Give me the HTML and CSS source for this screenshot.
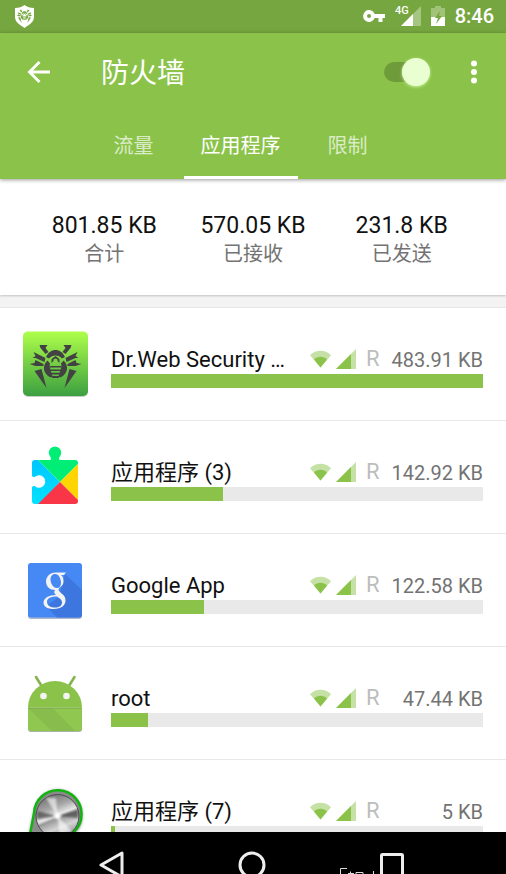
FILE: index.html
```html
<!DOCTYPE html>
<html lang="zh-CN">
<head>
<meta charset="utf-8">
<meta name="viewport" content="width=device-width, initial-scale=1">
<title>防火墙</title>
<link rel="stylesheet" href="styles.css">
</head>
<body>
<svg class="defs" aria-hidden="true">
  <symbol id="wifi" viewBox="0 0 21 18">
    <path d="M0 5.200C6-.7 15-.7 21 5.200L10.500 17.500z" fill="#c5e1a5"/>
    <path d="M4 9.400C7 6 14 6 17 9.400L10.500 17.500z" fill="#8bc34a"/>
  </symbol>
  <symbol id="cell" viewBox="0 0 20 20">
    <path d="M0 20L20 0v20z" fill="#c5e1a5"/>
    <path d="M0 20L15 5v15z" fill="#8bc34a"/>
  </symbol>
  <symbol id="spider" viewBox="0 0 52 44">
    <path d="M10 0h8l-2 3 3 4-3 2-5-6zM42 0h-8l2 3-3 4 3 2 5-6zM4 7l12 6-1 4-9-4-3 0 3-2zM48 7l-12 6 1 4 9-4 3 0-3-2zM6 15l8 4v2l-8 0-6-2 5-1zM46 15l-8 4v2l8 0 6-2-5-1zM5 26l7-2 5 19zM47 26l-7-2-5 19z"/>
    <path d="M16.500 12C19 7 22 5 26 5s7 2 9.500 7l-3 1.500C29 9.500 23 9.500 19.500 13.500z"/>
    <path d="M18 15.500C13 20 12.500 28 21 32.500l2-1-3-10 .5-3zM34 15.500c5 4.500 5.500 12.500-3 17l-2-1 3-10-.5-3z"/>
    <path d="M20 21h12v1.600H20zM20.500 24.400h11V26h-11zM21.500 27.800h9v1.600h-9zM21.500 31h9L29 33h-6z"/>
    <path d="M22 18v-4l4-3 4 3v4l-2-2v-1.500l-2-1-2 1V16z"/>
  </symbol>
</svg>

<div class="status">
  <svg class="shield" viewBox="0 0 21 23">
    <path d="M1 3C5 3 8 2 10.500 0 13 2 16 3 20 3v9c0 5-5 8-9.500 11C6 20 1 17 1 12z" fill="#fff"/>
    <use href="#spider" x="2.500" y="4.500" width="16" height="14" fill="#76a63f"/>
  </svg>
  <div class="status-right">
    <svg class="key" viewBox="0 0 22 12"><path fill="#fff" fill-rule="evenodd" d="M11.700 4A6 6 0 1 0 11.700 8H15.500v4h4V8H22V4zM6 4a2 2 0 1 1 0 4 2 2 0 0 1 0-4z"/></svg>
    <span class="mobile">
      <span class="net">4G</span>
      <svg class="signal" viewBox="0 0 20 20"><path d="M0 20L20 0v20z" fill="#a5c580"/><path d="M0 20L12 8v12z" fill="#fff"/></svg>
    </span>
    <svg class="battery" viewBox="0 0 14 20"><path d="M0 2h4V0h6v2h4v10H0z" fill="#a0c377"/><path d="M0 11h14v9H0z" fill="#fff"/><path d="M9 5L4 12h3l-2 6 6-8H8z" fill="#76a63f"/></svg>
    <time>8:46</time>
  </div>
</div>

<header class="header">
  <div class="bar">
    <button class="icon-button" type="button" aria-label="返回"><svg class="back" viewBox="0 0 24 22"><path d="M12.500 1L2.500 11l10 10M2.500 11H23" fill="none" stroke="#fff" stroke-width="2.800"/></svg></button>
    <h1>防火墙</h1>
    <input class="switch" type="checkbox" checked aria-label="防火墙">
    <button class="icon-button" type="button" aria-label="更多"><svg class="more" viewBox="0 0 6 24"><g fill="#fff"><circle cx="3" cy="3.500" r="3"/><circle cx="3" cy="12" r="3"/><circle cx="3" cy="20.500" r="3"/></g></svg></button>
  </div>
  <nav class="tabs">
    <a href="#traffic">流量</a>
    <a href="#apps" class="active" aria-current="page">应用程序</a>
    <a href="#limits">限制</a>
  </nav>
</header>

<main class="content">
  <dl class="summary">
    <div><dd>801.85 KB</dd><dt>合计</dt></div>
    <div><dd>570.05 KB</dd><dt>已接收</dt></div>
    <div><dd>231.8 KB</dd><dt>已发送</dt></div>
  </dl>

  <ul class="apps">
    <li class="app">
      <svg class="app-icon" viewBox="0 0 66 66">
        <defs><linearGradient id="lime" x2="0" y2="1"><stop stop-color="#aeff4a"/><stop offset="1" stop-color="#3c9f40"/></linearGradient></defs>
        <rect x="1" y="1" width="65" height="65" rx="5" fill="#c9cfc5"/>
        <rect x="1" y=".5" width="65" height="64.500" rx="5" fill="url(#lime)"/>
        <use href="#spider" x="7.500" y="14" width="52" height="44" fill="#424242"/>
      </svg>
      <div class="info">
        <div class="line"><span class="name">Dr.Web Security …</span><span class="access"><svg class="wifi"><use href="#wifi"/></svg><svg class="cell"><use href="#cell"/></svg><span class="roaming">R</span></span><span class="amount">483.91 KB</span></div>
        <div class="meter"><div class="fill" style="width:100%"></div></div>
      </div>
    </li>
    <li class="app">
      <svg class="app-icon" viewBox="0 0 66 66">
        <defs>
          <linearGradient id="sky" x2="0" y2="1"><stop stop-color="#00c0ff"/><stop offset="1" stop-color="#00e4ff"/></linearGradient>
          <clipPath id="piece"><path d="M13 16h14c2 0 2.500-1 1.500-3a6.200 6.200 0 1 1 9 0c-1 2-.5 3 1.500 3h14a3 3 0 0 1 3 3v38a3 3 0 0 1-3 3H13a3 3 0 0 1-3-3V44c0-2 1-2.500 3-1.800a6.200 6.200 0 1 0 0-9.400c-2 .7-3 0-3-1.800V19a3 3 0 0 1 3-3z"/></clipPath>
        </defs>
        <g clip-path="url(#piece)">
          <path d="M8 8l30 30-22 24H8z" fill="url(#sky)"/>
          <path d="M16 16V0h42v18L38 38z" fill="#00ee76"/>
          <path d="M58 18v40L38 38z" fill="#ffd500"/>
          <path d="M38 38l20 20v4H14z" fill="#f93647"/>
        </g>
      </svg>
      <div class="info">
        <div class="line"><span class="name">应用程序 (3)</span><span class="access"><svg class="wifi"><use href="#wifi"/></svg><svg class="cell"><use href="#cell"/></svg><span class="roaming">R</span></span><span class="amount">142.92 KB</span></div>
        <div class="meter"><div class="fill" style="width:30%"></div></div>
      </div>
    </li>
    <li class="app">
      <svg class="app-icon" viewBox="0 0 66 66">
        <rect x="6" y="7" width="54" height="55" rx="3" fill="#aeb9cb"/>
        <rect x="6" y="6" width="54" height="54.500" rx="3" fill="#4688f4"/>
        <path d="M43 17l17 16v24.500a3 3 0 0 1-3 3H35L24 49l13-9z" fill="#3d76df"/>
        <path fill="#f3f3f3" fill-rule="evenodd" d="M44 15.500H34c-7 0-10 5-10 9 0 5 4 8.500 9 8.500-1.500 2-.5 4 1 5-7 0-12.500 3-12.500 7.500 0 4.500 4.500 6.500 10 6.500 8 0 12-4 12-8.500 0-4-2-5.500-5-8-3-2.500-2-4 0-5.500 2-1.500 3-3 3-6 0-3-1-5-2.500-6H42zM33 17c4 0 6 5 6 9 0 3-1.500 5-4 5-4 0-6.500-5-6.500-8.500 0-3 1.500-5.500 4.500-5.500zm2 22.500c3 2 5 3.500 5 6 0 3-2.500 5-7 5s-8-2-8-5.500c0-4 4-5.500 10-5.500z"/>
      </svg>
      <div class="info">
        <div class="line"><span class="name">Google App</span><span class="access"><svg class="wifi"><use href="#wifi"/></svg><svg class="cell"><use href="#cell"/></svg><span class="roaming">R</span></span><span class="amount">122.58 KB</span></div>
        <div class="meter"><div class="fill" style="width:25%"></div></div>
      </div>
    </li>
    <li class="app">
      <svg class="app-icon" viewBox="0 0 66 66">
        <path d="M6 39h54v20a3 3 0 0 1-3 3H9a3 3 0 0 1-3-3z" fill="#aab39f"/>
        <path d="M14 7l5 8M52.500 7l-5 8" stroke="#86b34b" stroke-width="2.600" stroke-linecap="round"/>
        <path d="M6 37.500a27 26.500 0 0 1 54 0z" fill="#8bc34a"/>
        <path d="M6 38h54v20a3 3 0 0 1-3 3H9a3 3 0 0 1-3-3z" fill="#90c750"/>
        <path d="M6 38h25L53 61H30z" fill="#88bc4c"/>
        <path d="M6 38h54" stroke="#76a743"/>
        <circle cx="21.500" cy="26" r="3.300" fill="#f4f4f4"/><circle cx="44.500" cy="26" r="3.300" fill="#f4f4f4"/>
      </svg>
      <div class="info">
        <div class="line"><span class="name">root</span><span class="access"><svg class="wifi"><use href="#wifi"/></svg><svg class="cell"><use href="#cell"/></svg><span class="roaming">R</span></span><span class="amount">47.44 KB</span></div>
        <div class="meter"><div class="fill" style="width:10%"></div></div>
      </div>
    </li>
    <li class="app">
      <svg class="app-icon" viewBox="0 0 66 66">
        <defs>
          <linearGradient id="steel" x1=".3" x2=".7" y2="1"><stop stop-color="#707070"/><stop offset=".3" stop-color="#a8a8a8"/><stop offset=".48" stop-color="#e8e8e8"/><stop offset=".55" stop-color="#999"/><stop offset=".75" stop-color="#d4d4d4"/><stop offset="1" stop-color="#8a8a8a"/></linearGradient>
          <filter id="soft"><feGaussianBlur stdDeviation="1.500"/></filter>
          <filter id="sheen"><feGaussianBlur stdDeviation="1"/></filter>
        </defs>
        <g transform="translate(0 1)">
          <path d="M6 56l6-28a24 24 0 0 1 48 4c0 10-5 16-10 20v14H6z" fill="#666" filter="url(#soft)"/>
          <path d="M7 56l5-27a23.500 23.500 0 0 1 47.500 2c0 9-4 14-9 18l-6 14H7z" fill="#8b8b8b" stroke="#0db50d" stroke-width="2.400"/>
          <circle cx="35.500" cy="32" r="21.500" fill="url(#steel)" stroke="#4b4b4b"/>
          <g filter="url(#sheen)">
            <path d="M35.500 32L15 27v8zM35.500 32L56 26v8z" fill="#444" opacity=".7"/>
            <path d="M35.500 32L24 14h10zM35.500 32l14 15-12 4z" fill="#fff" opacity=".6"/>
            <circle cx="35.500" cy="32" r="3" fill="#fff"/>
          </g>
        </g>
      </svg>
      <div class="info">
        <div class="line"><span class="name">应用程序 (7)</span><span class="access"><svg class="wifi"><use href="#wifi"/></svg><svg class="cell"><use href="#cell"/></svg><span class="roaming">R</span></span><span class="amount">5 KB</span></div>
        <div class="meter"><div class="fill" style="width:1%"></div></div>
      </div>
    </li>
  </ul>
</main>

<footer class="system-nav">
  <button type="button" aria-label="返回"><svg viewBox="0 0 30 30"><path d="M25 3v24L4 15z" fill="none" stroke="#eee" stroke-width="3" stroke-linejoin="round"/></svg></button>
  <button type="button" aria-label="主屏幕"><svg viewBox="0 0 30 30"><circle cx="15" cy="15" r="12" fill="none" stroke="#eee" stroke-width="3"/></svg></button>
  <button class="recent" type="button" aria-label="最近"><svg viewBox="0 0 30 30"><rect x="4.500" y="4.500" width="21" height="24" rx="1" fill="none" stroke="#eee" stroke-width="3"/></svg>
    <svg class="marks" viewBox="0 0 40 8"><path d="M1.500 8V.5H8M9 5.500h6M11.500 3.500V8M17 8V4.500h7V8M34.500 3v5" fill="none" stroke="#ddd"/></svg></button>
</footer>
</body>
</html>
```

FILE: styles.css
```css
* {
  box-sizing: border-box;
}

body {
  margin: 0;
  height: 100vh;
  display: flex;
  flex-direction: column;
  overflow: hidden;
  background: #f3f3f3;
  color: #111;
  font-family: Roboto, "Noto Sans CJK SC", sans-serif;
}

button {
  padding: 0;
  border: 0;
  background: none;
}

svg {
  display: block;
  flex: none;
}

.defs {
  position: absolute;
  width: 0;
  height: 0;
}

.status {
  flex: none;
  height: 33px;
  padding: 0 12px 1px 14px;
  display: flex;
  align-items: center;
  justify-content: space-between;
  background: #76a63f;
  color: #fff;
}

.shield {
  width: 21px;
  height: 23px;
}

.status-right {
  display: flex;
  align-items: center;
  gap: 10px;
}

.key {
  width: 22px;
  height: 12px;
}

.mobile {
  display: flex;
  align-items: flex-start;
}

.net {
  margin-right: -8px;
  font-size: 11px;
  line-height: 10px;
  font-weight: 500;
}

.signal {
  width: 20px;
  height: 20px;
}

.battery {
  width: 14px;
  height: 20px;
}

.status time {
  font-size: 20px;
  font-weight: 500;
}

.header {
  flex: none;
  position: relative;
  background: #8bc34a;
  color: #fff;
  box-shadow: 0 1px 4px rgba(0, 0, 0, 0.4);
}

.bar {
  height: 78px;
  padding: 0 8px 0 15px;
  display: flex;
  align-items: center;
}

.icon-button {
  width: 48px;
  height: 48px;
  display: grid;
  place-items: center;
}

.back {
  width: 24px;
  height: 22px;
}

.more {
  width: 6px;
  height: 24px;
}

h1 {
  flex: 1;
  margin: 0 0 0 38px;
  padding-top: 4px;
  font-size: 28px;
  line-height: 40px;
  font-weight: 400;
}

.switch {
  appearance: none;
  position: relative;
  width: 46px;
  height: 20px;
  margin: 0 20px 0 0;
  border-radius: 10px;
  background: linear-gradient(90deg, #6f9c3b 36px, transparent 36px);
}

.switch::before {
  content: "";
  position: absolute;
  right: 0;
  top: -4px;
  width: 28px;
  height: 28px;
  border-radius: 50%;
  background: #e9ffd2;
  box-shadow: 0 1px 3px rgba(220, 255, 180, 0.8);
}

.tabs {
  display: flex;
  justify-content: center;
  padding-right: 25px;
}

.tabs a {
  height: 68px;
  padding: 0 17px;
  border-bottom: 3px solid transparent;
  color: rgba(255, 255, 255, 0.7);
  font-size: 20px;
  line-height: 70px;
  text-decoration: none;
}

.tabs a:not(.active) {
  padding: 0 30px;
}

.tabs .active {
  color: #fff;
  border-color: #fff;
}

.content {
  flex: 1;
  min-height: 0;
  overflow: hidden;
}

.summary {
  margin: 0 0 13px;
  padding: 32px 30px 28px;
  display: grid;
  grid-template-columns: repeat(3, 1fr);
  background: #fff;
  text-align: center;
  box-shadow: 0 1px 2px rgba(0, 0, 0, 0.2);
}

.summary > div {
  display: flex;
  flex-direction: column;
}

.summary dd {
  margin: 0;
  font-size: 23px;
  line-height: 30px;
}

.summary dt {
  color: #737373;
  font-size: 20px;
  line-height: 26px;
}

.apps {
  margin: 0;
  padding: 0;
  list-style: none;
  background: #fff;
  box-shadow: 0 -1px 0 #e8e8e8;
}

.app {
  height: 113px;
  padding: 0 23px 0 22px;
  border-bottom: 1px solid #e8e8e8;
  display: flex;
  align-items: center;
  gap: 23px;
}

.app-icon {
  width: 66px;
  height: 66px;
}

.info {
  flex: 1;
  min-width: 0;
  padding-top: 6px;
}

.line {
  height: 28px;
  display: flex;
  align-items: center;
}

.name {
  flex: 1;
  min-width: 0;
  overflow: hidden;
  white-space: nowrap;
  text-overflow: ellipsis;
  font-size: 22px;
  line-height: 28px;
}

.access {
  display: flex;
  align-items: center;
  gap: 5px;
  margin-left: 16px;
  padding-bottom: 3px;
  color: #bdbdbd;
}

.wifi {
  width: 21px;
  height: 18px;
}

.cell {
  width: 20px;
  height: 20px;
}

.roaming {
  width: 20px;
  padding-left: 5px;
  font-size: 22px;
  line-height: 28px;
}

.amount {
  width: 102px;
  color: #737373;
  font-size: 20px;
  line-height: 28px;
  text-align: right;
}

.meter {
  height: 14px;
  background: #e9e9e9;
}

.fill {
  height: 14px;
  background: #8bc34a;
}

.system-nav {
  flex: none;
  height: 42px;
  padding: 18px 44px 0 42px;
  display: flex;
  justify-content: center;
  gap: 110px;
  overflow: hidden;
  background: #000;
}

.system-nav button {
  height: 30px;
}

.system-nav svg {
  width: 30px;
  height: 30px;
}

.recent {
  position: relative;
}

.system-nav .marks {
  position: absolute;
  top: 18px;
  right: 28px;
  width: 40px;
  height: 8px;
}
```
